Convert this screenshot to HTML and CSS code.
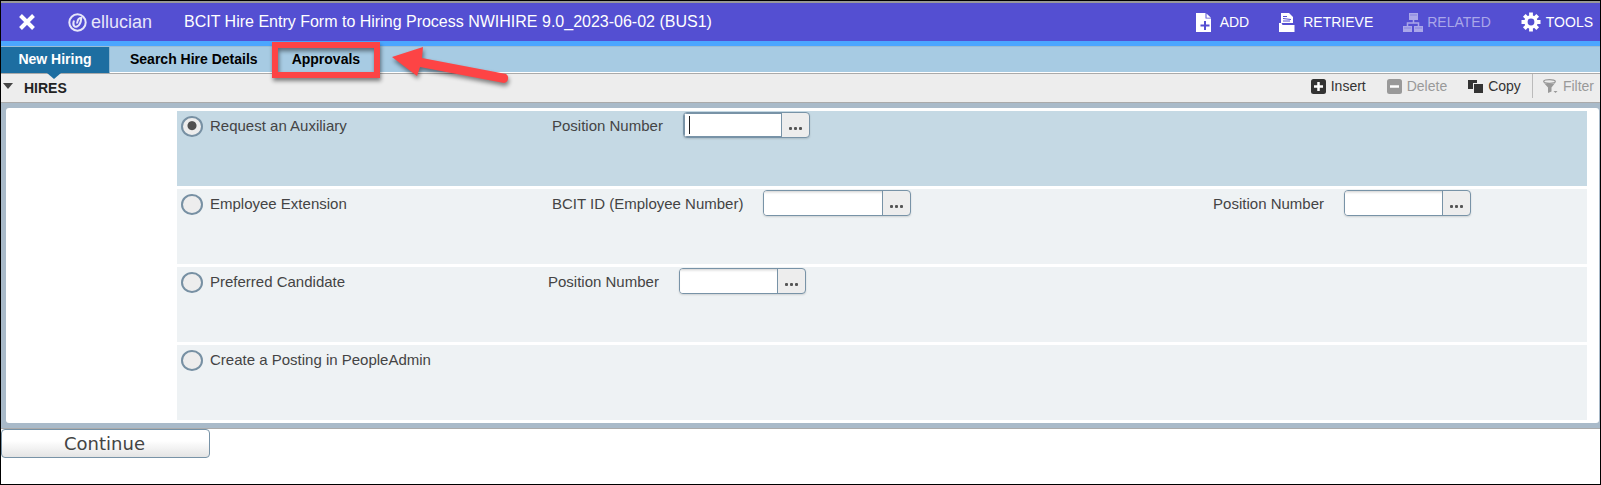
FILE: index.html
```html
<!DOCTYPE html>
<html lang="en">
<head>
<meta charset="utf-8">
<meta name="viewport" content="width=device-width, initial-scale=1">
<title>BCIT Hire Entry Form</title>
<link rel="stylesheet" href="styles.css">
</head>
<body>
<div class="app">
  <header class="header">
    <button class="close" type="button" aria-label="Close">
      <svg width="16" height="16" viewBox="0 0 16 16"><path d="M1.5 1.5 14.5 14.5M14.5 1.5 1.5 14.5" stroke="#fff" stroke-width="4" fill="none"/></svg>
    </button>
    <div class="brand">
      <svg width="19" height="19" viewBox="0 0 19 19" fill="none" stroke="#e6e6fa"><circle cx="9.500" cy="9.500" r="8.200" stroke-width="2"/><path d="M6 7.500C4 13 7 14.500 9 13.500C11.500 12.500 13 8.500 13.300 4.800C11 4.800 9.500 6.500 9 10.500" stroke-width="2"/></svg>
      <span class="brand-name">ellucian</span>
    </div>
    <h1 class="title">BCIT Hire Entry Form to Hiring Process NWIHIRE 9.0_2023-06-02 (BUS1)</h1>
    <nav class="actions" aria-label="Form actions">
      <button class="action add" type="button">
        <svg width="16" height="19" viewBox="0 0 16 19"><path d="M0 0h9.500v5.500H15V19H0z" fill="#fff"/><path d="M10.500.5 15 4.800h-4.500z" fill="#fff"/><path d="M9 8v9M4.500 12.500h9" stroke="#544fd2" stroke-width="2"/></svg>
        ADD</button>
      <button class="action retrieve" type="button">
        <svg width="16" height="19" viewBox="0 0 16 19"><path d="M2 0h8l4 4v6H2z" fill="#fff"/><path d="M4 3.500h4M4 5.500l8 1M4 8h7" stroke="#544fd2" stroke-width="1"/><path d="M0 10h2.500l1 2H15.500v7H0z" fill="#fff"/><path d="M3 10.500h12" stroke="#544fd2" stroke-width="1"/></svg>
        RETRIEVE</button>
      <button class="action related" type="button" disabled>
        <svg width="20" height="19" viewBox="0 0 20 19" fill="#aaa7e9"><path d="M6 0h9v7H6zM0 13h9v6H0zM11 13h9v6h-9z"/><path d="M10.500 7v3M4.500 13v-3h11v3" fill="none" stroke="#aaa7e9" stroke-width="1.500"/><path d="M7 2h7M1 15h7M12 15h7" stroke="#8682de" stroke-width="1"/></svg>
        RELATED</button>
      <button class="action tools" type="button">
        <svg width="20" height="20" viewBox="-10 -10 20 20"><g stroke="#fff" stroke-width="3.800"><path d="M0-9.500V9.500M-9.500 0H9.500M-6.700-6.700 6.700 6.700M6.700-6.700-6.700 6.700"/></g><circle r="6.700" fill="#fff"/><circle r="3.400" fill="#544fd2"/></svg>
        TOOLS</button>
    </nav>
  </header>
  <nav class="tabs" aria-label="Sections">
    <button class="tab active" type="button">New Hiring</button>
    <button class="tab search" type="button">Search Hire Details</button>
    <button class="tab approvals" type="button">Approvals
      <span class="highlight"></span>
      <svg class="arrow" width="128" height="52" viewBox="0 0 128 52"><path d="M1 17 32 7 31 18 115 34A5 5 0 0 1 113 43L29 27 26 36Z" fill="#fd4445"/></svg>
    </button>
  </nav>
  <div class="toolbar">
    <button class="collapse" type="button" aria-label="Collapse section"><svg width="10" height="6" viewBox="0 0 10 6"><path d="M0 0h10L5 6z" fill="#444"/></svg></button>
    <h2 class="section-title">HIRES</h2>
    <div class="tools-right">
      <button class="tool" type="button"><svg width="15" height="15" viewBox="0 0 15 15"><rect width="15" height="15" rx="2.500" fill="#333"/><path d="M7.500 3v9M3 7.500h9" stroke="#fff" stroke-width="2.500"/></svg>Insert</button>
      <button class="tool" type="button" disabled><svg width="15" height="15" viewBox="0 0 15 15"><rect width="15" height="15" rx="2.500" fill="#999"/><path d="M3 7.500h9" stroke="#fff" stroke-width="2.500"/></svg>Delete</button>
      <button class="tool" type="button"><svg width="15" height="13" viewBox="0 0 15 13" fill="#333"><path d="M0 0h9v3H5v6H0zM6 4h9v9H6z"/></svg>Copy</button>
      <button class="tool filter" type="button" disabled><svg width="15" height="15" viewBox="0 0 15 15"><ellipse cx="6.500" cy="2.500" rx="5.800" ry="1.800" fill="none" stroke="#999" stroke-width="1.300"/><path d="M.5 3.500C2 5.500 11 5.500 12.500 3.500L8.500 8.500v4L5 14V8.500z" fill="#999"/><path d="M10.500 12h4l-2 2z" fill="#999"/></svg>Filter</button>
    </div>
  </div>
  <main class="frame">
    <form class="panel" id="hire">
      <div class="row selected">
        <label class="choice"><input type="radio" name="kind" checked>Request an Auxiliary</label>
        <div class="field first"><label for="p1">Position Number</label><span class="lookup focused"><span class="caret"></span><input id="p1" type="text"><button type="button" aria-label="Look up position"><i></i><i></i><i></i></button></span></div>
      </div>
      <div class="row">
        <label class="choice"><input type="radio" name="kind">Employee Extension</label>
        <div class="field first"><label for="p2">BCIT ID (Employee Number)</label><span class="lookup wide"><input id="p2" type="text"><button type="button" aria-label="Look up employee"><i></i><i></i><i></i></button></span></div>
        <div class="field last"><label for="p3">Position Number</label><span class="lookup"><input id="p3" type="text"><button type="button" aria-label="Look up position"><i></i><i></i><i></i></button></span></div>
      </div>
      <div class="row">
        <label class="choice narrow"><input type="radio" name="kind">Preferred Candidate</label>
        <div class="field"><label for="p4">Position Number</label><span class="lookup"><input id="p4" type="text"><button type="button" aria-label="Look up position"><i></i><i></i><i></i></button></span></div>
      </div>
      <div class="row">
        <label class="choice"><input type="radio" name="kind">Create a Posting in PeopleAdmin</label>
      </div>
    </form>
  </main>
  <button class="continue" type="submit" form="hire">Continue</button>
</div>
</body>
</html>
```
FILE: styles.css
```css
* { box-sizing: border-box; }
body { margin: 0; font-family: "Liberation Sans", Arial, sans-serif; font-size: 15px; color: #444; background: #fff; }
button { margin: 0; padding: 0; border: 0; background: none; font: inherit; color: inherit; }
svg { display: block; flex: none; }
.app { min-height: 100vh; border: 1px solid #000; }

.header { display: flex; align-items: center; height: 45px; padding: 0 7px 0 18px; border-top: 2px solid #999; border-bottom: 5px solid #4ba6ff; background: #544fd2; color: #fff; }
.close { width: 16px; }
.brand { display: flex; align-items: center; gap: 4px; width: 116px; margin-left: 33px; color: #e6e6fa; }
.brand-name { font-size: 18px; line-height: 20px; }
.title { margin: 0; font-size: 16px; font-weight: 400; line-height: 20px; white-space: nowrap; }
.actions { display: flex; margin-left: auto; gap: 30px; }
.action { display: flex; align-items: center; gap: 8px; font-size: 14px; line-height: 20px; }
.related { gap: 4px; color: #aaa7e9; }
.tools { gap: 5px; }

.tabs { display: flex; height: 28px; border-top: 1px solid #9dbdd3; border-bottom: 1px solid #aaa; background: #a7cbe3; box-shadow: inset 0 -1px #fff; }
.tab { padding: 0 20px 2px; color: #000; font-size: 14px; font-weight: 700; line-height: 24px; }
.tab.search { padding-right: 14px; }
.tab.active { position: relative; width: 109px; padding: 0 0 2px; background: #1d6ea1; color: #fff; border-right: 1px solid #8db7d2; }
.tab.active::after { content: ""; position: absolute; left: 46px; top: 26px; border: 7px solid transparent; border-top: 6px solid #1d6ea1; border-bottom: 0; }
.tab.approvals { position: relative; }
.highlight { position: absolute; left: 0; right: 0; top: -5px; height: 36px; border: 6px solid #fd4445; box-shadow: 1px 3px 4px #0007, inset 1px 3px 4px #0007; }
.arrow { position: absolute; left: 119px; top: -7px; filter: drop-shadow(1px 3px 2px #0007); }

.toolbar { display: flex; align-items: center; height: 29px; padding: 0 6px 0 2px; border-bottom: 1px solid #aaa; background: #ededed; }
.collapse { align-self: flex-start; padding-top: 9px; }
.section-title { margin: 0 0 0 11px; font-size: 14px; color: #222; line-height: 20px; }
.tools-right { display: flex; align-self: flex-start; align-items: center; gap: 21px; margin-left: auto; }
.tool { display: flex; align-items: center; gap: 5px; height: 24px; font-size: 14px; color: #333; }
.tool:disabled { color: #999; }
.filter { margin-left: -10px; padding-left: 10px; border-left: 1px solid #bbb; }

.frame { padding: 5px 1px 5px 5px; border-bottom: 1px solid #aaa; background: #a9bac9; }
.panel { display: grid; gap: 3px; padding: 3px 12px 3px 171px; border-radius: 3px; background: #fff; }
.row { display: flex; align-items: flex-start; height: 75px; padding: 1px 116px 0 4px; background: #eef2f4; }
.selected { background: #c5d9e4; }
.choice { display: flex; align-items: center; gap: 7px; width: 371px; height: 26px; }
.choice.narrow { width: 367px; }
.choice input { appearance: none; width: 22px; height: 21px; margin: 2px 0 0; border: 2px solid #7790a3; border-radius: 50%; background: #ededed; }
.choice input:checked { background: radial-gradient(circle at 50% 45%, #505050 4px, #ededed 5px); }
.field { display: flex; align-items: center; gap: 20px; }
.last { margin-left: auto; }
.lookup { position: relative; display: flex; width: 127px; height: 26px; border: 1px solid #7893a7; border-radius: 4px; background: #ededed; box-shadow: 0 1px 2px #0002; overflow: hidden; }
.lookup.wide { width: 148px; }
.lookup input { flex: 1; min-width: 0; padding: 0 6px; border: 0; outline: 0; background: #fff; box-shadow: inset 0 3px 3px -2px #0003; font: inherit; }
.lookup button { display: flex; align-items: center; justify-content: center; gap: 2px; width: 28px; padding-top: 6px; border-left: 1px solid #7893a7; }
.lookup i { width: 3px; height: 3px; border-radius: 1px; background: #555; }
.focused input { box-shadow: inset 1px 1px #7893a7, inset 0 -1px #7893a7; }
.caret { position: absolute; left: 5px; top: 3px; width: 1px; height: 18px; background: #222; }
.continue { display: block; width: 209px; height: 29px; padding: 0 2px 1px 0; border: 1px solid #7893a7; border-radius: 4px; background: linear-gradient(#fff 40%, #e4e4e4); font-family: "DejaVu Sans", sans-serif; font-size: 18px; }
```
